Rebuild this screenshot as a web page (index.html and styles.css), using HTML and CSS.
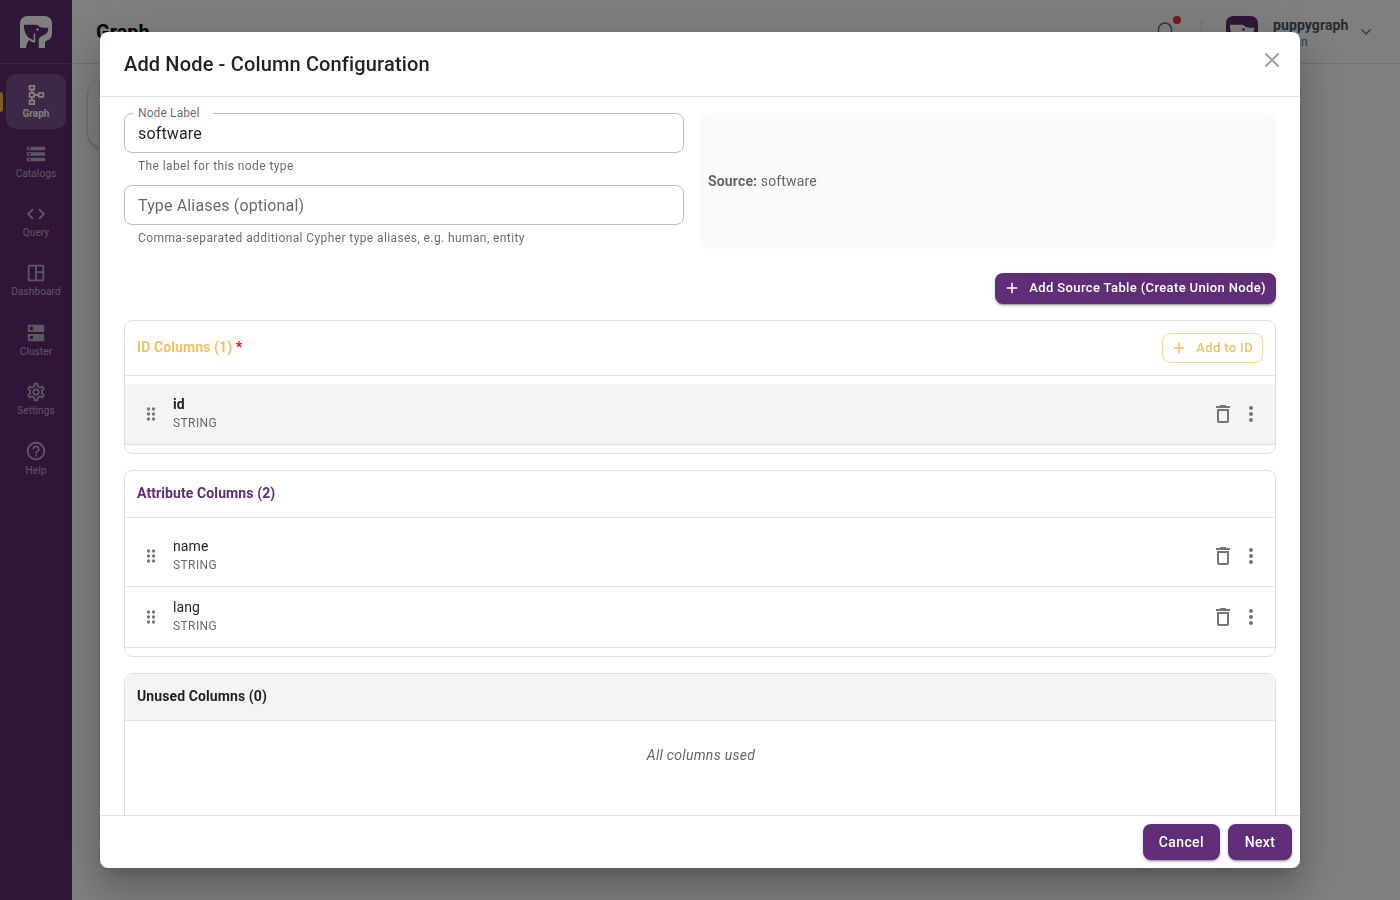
FILE: index.html
```html
<!DOCTYPE html>
<html lang="en">
<head>
    <meta charset="UTF-8">
    <meta name="viewport" content="width=device-width, initial-scale=1.0">
    <title>PuppyGraph</title>
    <link rel="stylesheet" href="styles.css">
</head>
<body>
    <!-- shared icons -->
    <svg class="icon-defs">
        <symbol id="icon-logo" viewBox="0 0 32 32">
            <path fill-rule="evenodd" d="M0 32V8Q0 0 8 0H24Q32 0 32 8V17Q32 23 27 24.500Q25 25 25 27V32H18.700V24Q19 21 22 20L25 18.500Q28.500 16.500 28.300 11.700H24Q20 11.500 18.500 10Q17.500 8.700 16 8.700H4V12Q5 18.500 8.500 21.500L13.700 24.600V17.500H15.200V26.800Q11.500 26.500 9 24Q6.500 27 6 32ZM17.500 12.200a1.300 1.300 0 1 1 0 2.600a1.300 1.300 0 0 1 0-2.600Z"/>
        </symbol>
        <symbol id="icon-add" viewBox="0 0 24 24"><path d="M19 13h-6v6h-2v-6H5v-2h6V5h2v6h6v2z"/></symbol>
        <symbol id="icon-delete" viewBox="0 0 24 24"><path d="M16 9v10H8V9h8m-1.500-6h-5l-1 1H5v2h14V4h-3.500l-1-1zM18 7H6v12c0 1.100.9 2 2 2h8c1.100 0 2-.9 2-2V7z"/></symbol>
        <symbol id="icon-more" viewBox="0 0 24 24"><circle cx="12" cy="6" r="2"/><circle cx="12" cy="12" r="2"/><circle cx="12" cy="18" r="2"/></symbol>
        <symbol id="icon-drag" viewBox="0 0 24 24"><circle cx="9" cy="6" r="2"/><circle cx="15" cy="6" r="2"/><circle cx="9" cy="12" r="2"/><circle cx="15" cy="12" r="2"/><circle cx="9" cy="18" r="2"/><circle cx="15" cy="18" r="2"/></symbol>
    </svg>

    <div class="app">
        <aside class="sidebar">
            <div class="brand"><svg><use href="#icon-logo"/></svg></div>
            <nav class="nav">
                <a class="nav-item active">
                    <svg viewBox="0 0 24 24"><path d="M14 9v2h-3V9H8.500V7H11V1H4v6h2.500v2H4v6h2.500v2H4v6h7v-6H8.500v-2H11v-2h3v2h7V9h-7zM6 3h3v2H6V3zm3 18H6v-2h3v2zm0-8H6v-2h3v2zm10 0h-3v-2h3v2z"/></svg>
                    <span>Graph</span>
                </a>
                <a class="nav-item">
                    <svg viewBox="0 0 24 24"><path d="M2 20h20v-4H2v4zm2-3h2v2H4v-2zM2 4v4h20V4H2zm4 3H4V5h2v2zm-4 7h20v-4H2v4zm2-3h2v2H4v-2z"/></svg>
                    <span>Catalogs</span>
                </a>
                <a class="nav-item">
                    <svg viewBox="0 0 24 24"><path d="M9.400 16.600L4.800 12l4.600-4.600L8 6l-6 6 6 6 1.400-1.400zm5.200 0l4.600-4.600-4.600-4.600L16 6l6 6-6 6-1.400-1.400z"/></svg>
                    <span>Query</span>
                </a>
                <a class="nav-item">
                    <svg viewBox="0 0 24 24"><path d="M19 3H5c-1.100 0-2 .9-2 2v14c0 1.100.9 2 2 2h14c1.100 0 2-.9 2-2V5c0-1.100-.9-2-2-2zM5 19V5h6v14H5zm14 0h-6v-7h6v7zm0-9h-6V5h6v5z"/></svg>
                    <span>Dashboard</span>
                </a>
                <a class="nav-item">
                    <svg viewBox="0 0 24 24"><path d="M20 13H4c-.55 0-1 .45-1 1v6c0 .55.45 1 1 1h16c.55 0 1-.45 1-1v-6c0-.55-.45-1-1-1zM7 19c-1.100 0-2-.9-2-2s.9-2 2-2 2 .9 2 2-.9 2-2 2zM20 3H4c-.55 0-1 .45-1 1v6c0 .55.45 1 1 1h16c.55 0 1-.45 1-1V4c0-.55-.45-1-1-1zM7 9c-1.100 0-2-.9-2-2s.9-2 2-2 2 .9 2 2-.9 2-2 2z"/></svg>
                    <span>Cluster</span>
                </a>
                <a class="nav-item">
                    <svg viewBox="0 0 24 24"><path d="M19.430 12.980c.04-.32.07-.64.07-.98 0-.34-.03-.66-.07-.98l2.110-1.650c.19-.15.24-.42.12-.64l-2-3.460c-.09-.16-.26-.25-.44-.25-.06 0-.12.010-.17.030l-2.490 1c-.52-.4-1.080-.73-1.690-.98l-.38-2.650C14.460 2.180 14.250 2 14 2h-4c-.25 0-.46.18-.49.42l-.38 2.650c-.61.25-1.170.59-1.690.98l-2.490-1c-.06-.02-.12-.03-.18-.03-.17 0-.34.09-.43.25l-2 3.460c-.13.22-.07.49.12.64l2.110 1.650c-.04.32-.07.65-.07.98 0 .33.03.66.07.98l-2.110 1.650c-.19.15-.24.42-.12.64l2 3.460c.09.16.26.25.44.25.06 0 .12-.01.17-.03l2.490-1c.52.4 1.080.73 1.690.98l.38 2.650c.03.24.24.42.49.42h4c.25 0 .46-.18.49-.42l.38-2.650c.61-.25 1.170-.59 1.690-.98l2.490 1c.06.02.12.03.18.03.17 0 .34-.09.43-.25l2-3.460c.12-.22.07-.49-.12-.64l-2.110-1.650zm-1.980-1.710c.04.31.05.52.05.73 0 .21-.02.43-.05.73l-.14 1.130.89.7 1.080.84-.7 1.210-1.270-.51-1.040-.42-.9.68c-.43.32-.84.56-1.250.73l-1.060.43-.16 1.130-.2 1.350h-1.400l-.19-1.350-.16-1.130-1.060-.43c-.43-.18-.83-.41-1.230-.71l-.91-.7-1.060.43-1.270.51-.7-1.210 1.080-.84.89-.7-.14-1.130c-.03-.31-.05-.54-.05-.74s.02-.43.05-.73l.14-1.130-.89-.7-1.080-.84.7-1.210 1.270.51 1.040.42.9-.68c.43-.32.84-.56 1.250-.73l1.060-.43.16-1.130.2-1.350h1.390l.19 1.350.16 1.130 1.060.43c.43.18.83.41 1.230.71l.91.7 1.060-.43 1.270-.51.7 1.210-1.070.85-.89.7.14 1.130zM12 8c-2.210 0-4 1.790-4 4s1.790 4 4 4 4-1.790 4-4-1.790-4-4-4zm0 6c-1.100 0-2-.9-2-2s.9-2 2-2 2 .9 2 2-.9 2-2 2z"/></svg>
                    <span>Settings</span>
                </a>
                <a class="nav-item">
                    <svg viewBox="0 0 24 24"><path d="M11 18h2v-2h-2v2zm1-16C6.480 2 2 6.480 2 12s4.480 10 10 10 10-4.480 10-10S17.520 2 12 2zm0 18c-4.410 0-8-3.590-8-8s3.590-8 8-8 8 3.590 8 8-3.590 8-8 8zm0-14c-2.210 0-4 1.790-4 4h2c0-1.100.9-2 2-2s2 .9 2 2c0 2-3 1.750-3 5h2c0-2.250 3-2.500 3-5 0-2.210-1.790-4-4-4z"/></svg>
                    <span>Help</span>
                </a>
            </nav>
        </aside>
        <div class="main">
            <header class="topbar">
                <h1>Graph</h1>
                <div class="bell">
                    <svg viewBox="0 0 24 24"><path d="M3.500 19h17M5.500 19v-9.500a6.500 6.500 0 0 1 13 0V19M10 22h4"/></svg>
                    <i class="bell-dot"></i>
                </div>
                <div class="divider"></div>
                <svg class="avatar"><use href="#icon-logo"/></svg>
                <div class="user">
                    <strong>puppygraph</strong>
                    <span>Admin</span>
                </div>
                <svg class="chevron" viewBox="0 0 12 12"><path d="M1.500 3.500L6 8l4.500-4.500"/></svg>
            </header>
            <div class="content"><div class="panel"></div></div>
        </div>
    </div>

    <div class="backdrop">
        <div class="dialog">
            <div class="dialog-header">
                <h2>Add Node - Column Configuration</h2>
                <button class="close"><svg viewBox="0 0 16 16"><path d="M1.500 1.500l13 13M14.500 1.500l-13 13"/></svg></button>
            </div>

            <div class="dialog-body">
                <div class="form-row">
                    <div class="fields">
                        <div class="field">
                            <div class="input"><label>Node Label</label>software</div>
                            <div class="hint">The label for this node type</div>
                        </div>
                        <div class="field">
                            <div class="input placeholder">Type Aliases (optional)</div>
                            <div class="hint">Comma-separated additional Cypher type aliases, e.g. human, entity</div>
                        </div>
                    </div>
                    <div class="source"><b>Source:</b>&nbsp;software</div>
                </div>

                <div class="toolbar">
                    <button class="btn btn-small"><svg><use href="#icon-add"/></svg>Add Source Table (Create Union Node)</button>
                </div>

                <section class="group">
                    <div class="group-header id-header">
                        <h3>ID Columns (1) <em>*</em></h3>
                        <button class="btn btn-outline"><svg><use href="#icon-add"/></svg>Add to ID</button>
                    </div>
                    <div class="list">
                        <div class="row id-row">
                            <svg class="drag"><use href="#icon-drag"/></svg>
                            <div class="column"><b>id</b><span>STRING</span></div>
                            <svg class="action"><use href="#icon-delete"/></svg>
                            <svg class="action"><use href="#icon-more"/></svg>
                        </div>
                    </div>
                </section>

                <section class="group">
                    <div class="group-header attr-header">
                        <h3>Attribute Columns (2)</h3>
                    </div>
                    <div class="list">
                        <div class="row">
                            <svg class="drag"><use href="#icon-drag"/></svg>
                            <div class="column"><b>name</b><span>STRING</span></div>
                            <svg class="action"><use href="#icon-delete"/></svg>
                            <svg class="action"><use href="#icon-more"/></svg>
                        </div>
                        <div class="row">
                            <svg class="drag"><use href="#icon-drag"/></svg>
                            <div class="column"><b>lang</b><span>STRING</span></div>
                            <svg class="action"><use href="#icon-delete"/></svg>
                            <svg class="action"><use href="#icon-more"/></svg>
                        </div>
                    </div>
                </section>

                <section class="group">
                    <div class="group-header unused-header">
                        <h3>Unused Columns (0)</h3>
                    </div>
                    <div class="empty">All columns used</div>
                </section>
            </div>

            <div class="dialog-footer">
                <button class="btn">Cancel</button>
                <button class="btn">Next</button>
            </div>
        </div>
    </div>
</body>
</html>
```
FILE: styles.css
```css
* {
    margin: 0;
    padding: 0;
    box-sizing: border-box;
}

body {
    font-family: Roboto, "Liberation Sans", sans-serif;
    color: rgba(0, 0, 0, 0.87);
    height: 100vh;
    overflow: hidden;
}

svg {
    display: block;
    flex: none;
    fill: currentColor;
}

.icon-defs {
    display: none;
}

.app {
    display: flex;
    height: 100vh;
    background: #fff;
}

.sidebar {
    width: 72px;
    background: #5e2c73;
    color: #fff;
}

.brand {
    height: 64px;
    padding: 16px 20px;
    border-bottom: 1px solid rgba(255, 255, 255, 0.15);
}

.brand svg {
    width: 32px;
    height: 32px;
}

.nav {
    display: flex;
    flex-direction: column;
    gap: 4px;
    padding: 10px 6px;
}

.nav-item {
    position: relative;
    height: 55.4px;
    padding-top: 10px;
    border-radius: 10px;
    display: flex;
    flex-direction: column;
    align-items: center;
    gap: 1.2px;
    font-size: 10px;
    line-height: 14px;
    font-weight: 400;
    letter-spacing: 0.1px;
    color: rgba(255, 255, 255, 0.6);
}

.nav-item svg {
    width: 22px;
    height: 22px;
}

.nav-item.active {
    background: rgba(255, 255, 255, 0.18);
    color: #fff;
    font-weight: 700;
    letter-spacing: 0;
}

.nav-item.active::before {
    content: '';
    position: absolute;
    left: -6px;
    top: 18px;
    width: 3px;
    height: 20px;
    border-radius: 0 3px 3px 0;
    background: #f4c145;
}

.main {
    flex: 1;
}

.topbar {
    height: 64px;
    padding: 0 28px 0 24px;
    border-bottom: 1px solid #e0e0e0;
    display: flex;
    align-items: center;
}

.topbar h1 {
    flex: 1;
    font-size: 20px;
    font-weight: 700;
    color: #000;
}

.bell {
    position: relative;
    color: #6b7280;
}

.bell svg {
    width: 24px;
    height: 24px;
    fill: none;
    stroke: currentColor;
    stroke-width: 1.5;
}

.bell-dot {
    position: absolute;
    top: -4px;
    right: -4px;
    width: 8px;
    height: 8px;
    border-radius: 50%;
    background: #e53935;
}

.divider {
    width: 1px;
    height: 24px;
    margin: 0 24px;
    background: #e0e0e0;
}

.avatar {
    width: 32px;
    height: 32px;
    color: #5e2c73;
}

.user {
    width: 75px;
    margin: 3px 12px 0 15px;
    font-size: 12px;
    line-height: 17px;
    color: #6b7280;
}

.user strong {
    display: block;
    font-size: 14px;
    line-height: 18px;
    font-weight: 700;
    letter-spacing: 0.1px;
    color: #4b5563;
}

.chevron {
    width: 12px;
    height: 12px;
    fill: none;
    stroke: #6b7280;
    stroke-width: 1.3;
}

.content {
    padding: 16px;
}

.panel {
    width: 320px;
    height: 68px;
    border-radius: 16px;
    box-shadow: 0 1px 3px rgba(0, 0, 0, 0.4);
}

.backdrop {
    position: fixed;
    inset: 0;
    background: rgba(0, 0, 0, 0.5);
    display: flex;
    align-items: center;
    justify-content: center;
}

.dialog {
    width: 1200px;
    height: 836px;
    background: #fff;
    border-radius: 8px;
    overflow: hidden;
    display: flex;
    flex-direction: column;
    box-shadow: 0 11px 15px -7px rgba(0, 0, 0, 0.2), 0 24px 38px 3px rgba(0, 0, 0, 0.14), 0 9px 46px 8px rgba(0, 0, 0, 0.12);
}

.dialog-header {
    height: 65px;
    flex: none;
    padding: 0 20px 0 24px;
    border-bottom: 1px solid #e0e0e0;
    display: flex;
    align-items: center;
    justify-content: space-between;
}

.dialog-header h2 {
    font-size: 20px;
    font-weight: 500;
    letter-spacing: 0.15px;
}

.close {
    border: 0;
    background: none;
    color: #999;
    padding: 0 0 8px;
}

.close svg {
    width: 16px;
    height: 16px;
    stroke: currentColor;
    stroke-width: 1.8;
}

.dialog-body {
    flex: 1;
    min-height: 0;
    overflow: hidden;
    padding: 16px 24px 0;
}

.form-row {
    display: flex;
    gap: 16px;
}

.fields {
    width: 560px;
    display: flex;
    flex-direction: column;
    gap: 8px;
}

.field {
    height: 64px;
}

.input {
    position: relative;
    height: 40px;
    padding: 0 13px;
    border: 1px solid #bdbdbd;
    border-radius: 8px;
    font-size: 16px;
    line-height: 40px;
    letter-spacing: 0.15px;
}

.input label {
    position: absolute;
    top: -9px;
    left: 8px;
    width: 80px;
    padding-left: 5px;
    background: #fff;
    font-size: 12px;
    line-height: 16px;
    letter-spacing: 0.11px;
    color: rgba(0, 0, 0, 0.6);
}

.placeholder {
    color: rgba(0, 0, 0, 0.6);
}

.hint {
    padding: 3px 14px 0;
    font-size: 12px;
    line-height: 20px;
    letter-spacing: 0.4px;
    color: rgba(0, 0, 0, 0.6);
}

.source {
    flex: 1;
    display: flex;
    align-items: center;
    padding: 0 8px;
    border-radius: 8px;
    background: #fafafa;
    font-size: 14px;
    letter-spacing: 0.15px;
    color: #666;
}

.toolbar {
    display: flex;
    justify-content: flex-end;
    padding: 24px 0 16px;
}

.btn {
    min-width: 64px;
    height: 36px;
    padding: 0 16px;
    border: 0;
    border-radius: 8px;
    background: #5f2e76;
    color: #fff;
    display: flex;
    align-items: center;
    justify-content: center;
    font-family: inherit;
    font-size: 14px;
    font-weight: 500;
    letter-spacing: 0.4px;
    white-space: nowrap;
    box-shadow: 0 3px 1px -2px rgba(0, 0, 0, 0.2), 0 2px 2px 0 rgba(0, 0, 0, 0.14), 0 1px 5px 0 rgba(0, 0, 0, 0.12);
}

.btn svg {
    width: 18px;
    height: 18px;
    margin-right: 8px;
}

.btn-small {
    height: 31px;
    padding: 0 10px 2px 8px;
    font-size: 13px;
    letter-spacing: 0.37px;
}

.btn-outline {
    height: 30px;
    padding: 0 9px 1px 7px;
    border: 1px solid #f7d894;
    background: #fff;
    color: #f0c265;
    font-size: 13px;
    letter-spacing: 0.37px;
    box-shadow: none;
}

.group {
    margin-bottom: 16px;
    border: 1px solid #e0e0e0;
    border-radius: 8px;
}

.group-header {
    height: 47px;
    padding: 12px;
    border-bottom: 1px solid #e0e0e0;
    display: flex;
    justify-content: space-between;
}

.group-header h3 {
    font-size: 14px;
    line-height: 20px;
    font-weight: 700;
    letter-spacing: 0.1px;
}

.group-header em {
    color: #f00;
    font-style: normal;
}

.id-header {
    height: 55px;
}

.id-header h3 {
    padding-top: 4px;
    color: #f0c265;
}

.attr-header h3 {
    color: #5f2e76;
}

.unused-header {
    background: #f4f4f4;
}

.list {
    padding: 8px 0;
}

.row {
    height: 61px;
    padding: 0 12px 0 16px;
    border-bottom: 1px solid #e0e0e0;
    display: flex;
    align-items: center;
}

.id-row {
    background: #f4f4f4;
}

.drag {
    width: 20px;
    height: 20px;
    color: #757575;
}

.column {
    flex: 1;
    padding: 0 0 2px 12px;
}

.column b {
    display: block;
    font-size: 14px;
    line-height: 20px;
    font-weight: 400;
    letter-spacing: 0.1px;
}

.id-row b {
    font-weight: 700;
}

.column span {
    display: block;
    font-size: 12px;
    line-height: 18px;
    letter-spacing: 0.4px;
    color: rgba(0, 0, 0, 0.6);
}

.action {
    width: 24px;
    height: 24px;
    margin-left: 4px;
    color: #757575;
}

.empty {
    height: 120px;
    padding: 24px 0 0 2px;
    text-align: center;
    font-size: 14px;
    line-height: 20px;
    letter-spacing: 0.3px;
    font-style: italic;
    color: #666;
}

.dialog-footer {
    height: 53px;
    flex: none;
    padding: 8px;
    border-top: 1px solid #e0e0e0;
    display: flex;
    justify-content: flex-end;
    gap: 8px;
}
```
